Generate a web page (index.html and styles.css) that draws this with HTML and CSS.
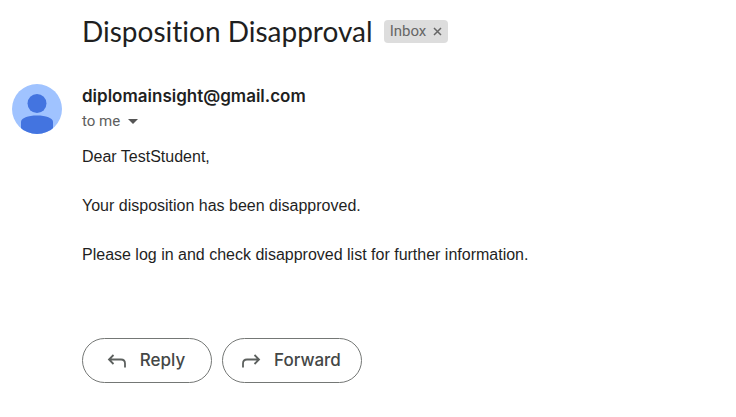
FILE: index.html
```html
<!DOCTYPE html>
<html lang="en">
<head>
<meta charset="utf-8">
<title>Disposition Disapproval</title>
<meta name="viewport" content="width=device-width, initial-scale=1">
<link rel="stylesheet" href="styles.css">
</head>
<body>
<main class="mail">
  <header class="subject">
    <h1 class="title">Disposition Disapproval</h1>
    <div class="label"><span>Inbox</span><button class="remove" type="button" aria-label="Remove label Inbox"><svg width="9" height="9" viewBox="0 0 9 9"><path d="M1 1l7 7M8 1l-7 7" stroke="#666" stroke-width="1.5"/></svg></button></div>
  </header>
  <article class="message">
    <svg class="avatar" viewBox="0 0 50 50" aria-hidden="true">
      <defs><clipPath id="disc"><circle cx="25" cy="25" r="25"/></clipPath></defs>
      <g clip-path="url(#disc)"><path fill="#a0c3ff" d="M0 0h50v50H0z"/><circle cx="25" cy="19.500" r="9.500" fill="#4374e0"/><path fill="#4374e0" d="M9 42V38c0-4 7-6.500 16-6.500S41 34 41 38v12H9z"/></g>
    </svg>
    <div class="content">
      <h2 class="sender">diplomainsight@gmail.com</h2>
      <button class="recipient" type="button">to me <svg width="10" height="5" viewBox="0 0 10 5" aria-hidden="true"><path fill="#555" d="M0 0h10L5 5z"/></svg></button>
      <div class="body">
        <p>Dear TestStudent,</p>
        <p>Your disposition has been disapproved.</p>
        <p>Please log in and check disapproved list for further information.</p>
      </div>
      <div class="actions">
        <button class="action" type="button"><svg width="20" height="16" viewBox="0 0 20 16" aria-hidden="true"><path fill="none" stroke="#5c605e" stroke-width="1.8" d="M6.500 3L2 7.500 6.500 12M2 7.500h12q4 0 4 4v4"/></svg>Reply</button>
        <button class="action" type="button"><svg width="20" height="16" viewBox="0 0 20 16" aria-hidden="true"><path fill="none" stroke="#5c605e" stroke-width="1.8" d="M13.500 3l4.500 4.500-4.500 4.500M18 7.500H6q-4 0-4 4v4"/></svg>Forward</button>
      </div>
    </div>
  </article>
</main>
</body>
</html>
```
FILE: styles.css
```css
* { box-sizing: border-box; }
body { margin: 0; background: #fff; color: #1f1f1f; font-family: Roboto, sans-serif; }
button { font: inherit; color: inherit; border: 0; background: none; padding: 0; }
.mail { padding: 14px 12px; }
.subject { display: flex; align-items: center; gap: 11px; padding-left: 70px; }
.title { margin: 0; font: 400 28px/34px Lato, sans-serif; font-variant-ligatures: none; }
.label { display: flex; align-items: center; gap: 7px; height: 23px; padding: 0 6px; border-radius: 4px; background: #ddd; color: #666; font-size: 15px; }
.remove { display: flex; }
.message { display: flex; gap: 20px; padding-top: 36px; }
.avatar { flex: none; width: 50px; height: 50px; }
.content { flex: 1; min-width: 0; }
.sender { margin: 0; font: 600 17px/24px Inter, sans-serif; }
.recipient { display: flex; align-items: center; gap: 8px; color: #5e5e5e; font-size: 15px; line-height: 26px; }
.body { padding-top: 10px; font: 16px/25px "Liberation Sans", Arial, sans-serif; }
.body p { margin: 0 0 24px; }
.actions { display: flex; flex-wrap: wrap; gap: 10px; padding-top: 47px; }
.action { display: flex; align-items: center; justify-content: center; gap: 13px; height: 45px; min-width: 130px; padding: 0 20px 2px 18px; border: 1px solid #747775; border-radius: 23px; color: #444746; font: 500 17px Inter, sans-serif; }
```
